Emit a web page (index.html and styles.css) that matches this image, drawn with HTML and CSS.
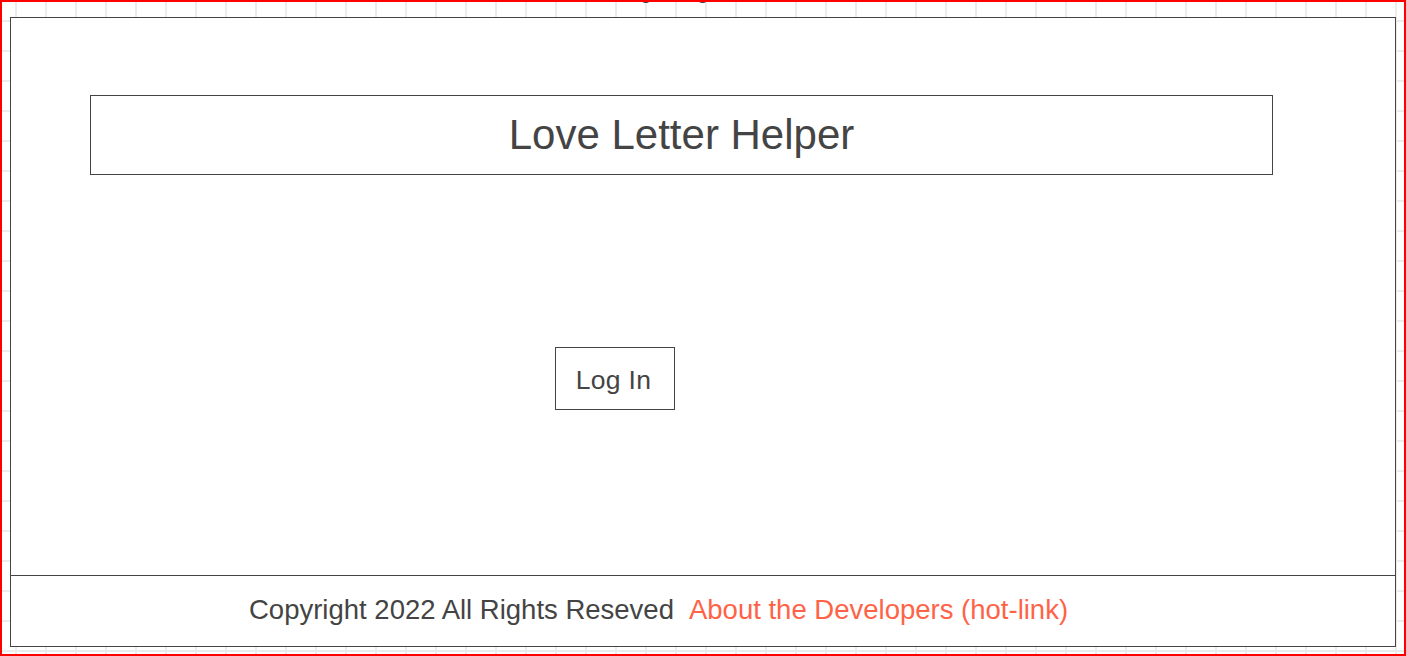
FILE: index.html
```html
<!DOCTYPE html>
<html lang="en">
<head>
<meta charset="utf-8">
<title>Love Letter Helper</title>
<link rel="stylesheet" href="styles.css">
</head>
<body>
<div class="frame">
  <div class="frame-label">Login Page</div>
  <div class="panel">
    <main class="main">
      <header class="title-box">
        <h1 class="title">Love Letter Helper</h1>
      </header>
      <button class="login-btn" type="button">Log In</button>
    </main>
    <footer class="footer">
      <span class="copyright">Copyright 2022 All Rights Reseved</span>
      <a class="dev-link" href="#">About the Developers (hot-link)</a>
    </footer>
  </div>
</div>
</body>
</html>
```

FILE: styles.css
```css
html, body {
  margin: 0;
  padding: 0;
  background: #fff;
}

body {
  font-family: "Liberation Sans", Arial, sans-serif;
  color: #444;
}

.frame {
  position: relative;
  box-sizing: border-box;
  width: 1406px;
  height: 656px;
  padding: 17px 0 0 10px;
  overflow: hidden;
  background-color: #fff;
  background-image:
    linear-gradient(to right, #ececec 2px, transparent 2px),
    linear-gradient(to bottom, #ececec 2px, transparent 2px);
  background-size: 30px 30px, 30px 30px;
  background-position: 15px 0, 0 20px;
}

.frame::after {
  content: "";
  position: absolute;
  inset: 0;
  border: 2px solid #ff0000;
  pointer-events: none;
}

.frame-label {
  position: absolute;
  top: -18px;
  left: 618px;
  font-size: 20px;
  line-height: 20px;
  color: #444;
  white-space: nowrap;
}

.panel {
  box-sizing: border-box;
  width: 1386px;
  height: 630px;
  border: 1px solid #444;
  background: #fff;
  display: flex;
  flex-direction: column;
}

.main {
  flex: 1;
  display: flex;
  flex-direction: column;
  align-items: flex-start;
  padding: 77px 0 0 79px;
}

.title-box {
  box-sizing: border-box;
  width: 1183px;
  height: 80px;
  border: 1px solid #444;
  display: flex;
  align-items: center;
  justify-content: center;
}

.title {
  margin: 0;
  font-size: 42px;
  font-weight: normal;
  line-height: 1;
  color: #444;
}

.login-btn {
  box-sizing: border-box;
  margin: 172px 0 0 465px;
  width: 120px;
  height: 63px;
  padding: 3px 3px 0 0;
  border: 1px solid #444;
  background: #fff;
  font-family: "Liberation Sans", Arial, sans-serif;
  font-size: 26.5px;
  letter-spacing: 0.3px;
  color: #444;
  cursor: pointer;
}

.footer {
  box-sizing: border-box;
  height: 71px;
  border-top: 1px solid #444;
  display: flex;
  align-items: center;
  padding: 0 0 2px 238px;
  font-size: 27.5px;
  white-space: nowrap;
}

.copyright {
  color: #444;
}

.dev-link {
  margin-left: 15px;
  color: #ff6347;
  text-decoration: none;
}
```
